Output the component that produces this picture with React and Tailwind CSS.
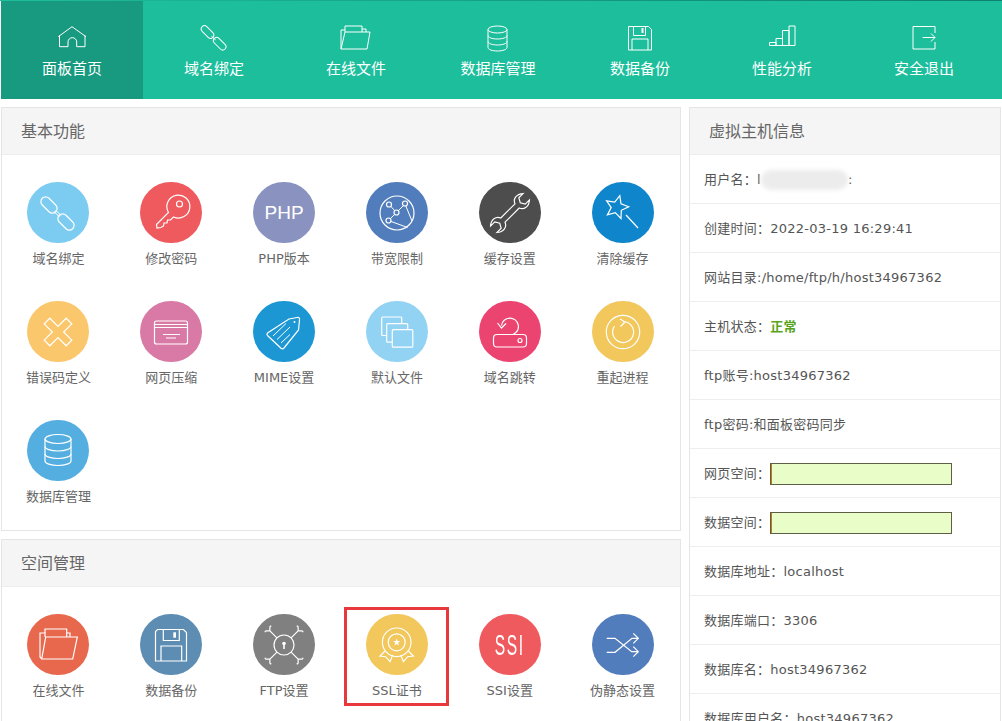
import React from "react";

const FONT = { fontFamily: '"DejaVu Sans", "Noto Sans CJK SC", sans-serif' };

function starPoints(cx, cy, R, r, rot) {
  const pts = [];
  for (let i = 0; i < 10; i++) {
    const rad = i % 2 ? r : R;
    const a = ((rot + i * 36 - 90) * Math.PI) / 180;
    pts.push(`${(cx + rad * Math.cos(a)).toFixed(1)},${(cy + rad * Math.sin(a)).toFixed(1)}`);
  }
  return pts.join(" ");
}

// nav icons, 32 box
function NavSvg({ children }) {
  return (
    <svg width="32" height="32" viewBox="1 0 32 32" fill="none" stroke="#fff" strokeWidth="1">
      {children}
    </svg>
  );
}

const navItems = [
  {
    label: "面板首页",
    active: true,
    icon: (
      <>
        <path d="M3.3 14.7 17 4.7l14 10" />
        <path d="M4.5 13.5v11.2H13V20a4.3 4.3 0 0 1 8.7 0v4.7H30V13.5" />
      </>
    ),
  },
  {
    label: "域名绑定",
    icon: (
      <>
        <rect x="7.25" y="2.5" width="6.5" height="15" rx="3.25" transform="rotate(-45 10.5 10)" />
        <rect x="19.45" y="14.2" width="6.5" height="15" rx="3.25" transform="rotate(-45 22.7 21.7)" />
        <path d="M14.5 14.3l4.2 3.6" />
      </>
    ),
  },
  {
    label: "在线文件",
    icon: (
      <>
        <path d="M6 10V4h17v6M23 7h4v3" />
        <path d="M6 8H2v19h26l3-17H6L2 27" />
      </>
    ),
  },
  {
    label: "数据库管理",
    icon: (
      <>
        <ellipse cx="16.5" cy="7.5" rx="9.5" ry="3.5" />
        <path d="M7 7.5v18c0 2 4.3 3.5 9.5 3.5s9.5-1.5 9.5-3.5v-18" />
        <path d="M7 13.5c0 2 4.3 3.5 9.5 3.5s9.5-1.5 9.5-3.5M7 19.5c0 2 4.3 3.5 9.5 3.5s9.5-1.5 9.5-3.5" />
      </>
    ),
  },
  {
    label: "数据备份",
    icon: (
      <>
        <path d="M5.5 4.5h20l3 3v20.5h-23z" />
        <path d="M10.5 4.5v9h12v-9M9 28V17h16v11" />
        <rect x="18.5" y="6" width="2" height="5" fill="#fff" stroke="none" />
      </>
    ),
  },
  {
    label: "性能分析",
    icon: <path d="M4.5 23.5v-3h6.5v3M11 23.5v-7h6.5v7M17.5 23.5v-15H24v15M24 23.5v-19.5h6v19.5M4.5 23.5H30" />,
  },
  {
    label: "安全退出",
    icon: <path d="M28 11V4.5H6v22.5h22v-7M15.7 15.5H28M24 11.5l4 4-4 4" />,
  },
];

function Wrench() {
  return (
    <path
      transform="translate(31 31) rotate(45)"
      d="M-3-10C-8-12-9-18-4.5-23v6L0-14.5 4.5-17v-6C9-18 8-12 3-10v20c5 2 6 8 1.5 13v-6L0 14.5-4.5 17v6C-9 18-8 12-3 10z"
    />
  );
}

function Fork({ rot }) {
  return (
    <g transform={`rotate(${rot} 31 31)`}>
      <path d="M31 21V10M31 11l-3-3M31 11l3-3M28 8l-1.5.5M34 8l1.5.5" />
    </g>
  );
}

const basic = [
  {
    label: "域名绑定",
    color: "bg-[#7ccbf0]",
    icon: (
      <>
        <rect x="17.25" y="13.5" width="9.5" height="19" rx="4.75" transform="rotate(-45 22 23)" />
        <rect x="34.25" y="30.5" width="9.5" height="19" rx="4.75" transform="rotate(-45 39 40)" />
        <path d="M27 29.5l5.5 5.5M28.5 28l5.5 5.5" strokeWidth="1" />
      </>
    ),
  },
  {
    label: "修改密码",
    color: "bg-[#ee5a5e]",
    icon: (
      <>
        <path d="M28.5 30.5a11.5 11.5 0 1 1 5 4.5l-3 3h-3l-.5 3h-3l-.5 3-2.5 1.5-4 .5-.5-3.5z" />
        <circle cx="39.5" cy="22" r="3" />
      </>
    ),
  },
  { label: "PHP版本", color: "bg-[#8a93bf]", text: "PHP" },
  {
    label: "带宽限制",
    color: "bg-[#527dbd]",
    icon: (
      <>
        <circle cx="31" cy="31" r="17" />
        <path d="M23 22.5l7.5 8 8.5-8.5 7 17M30.5 30.5l-8 8 19 7" strokeWidth="1" />
        <circle cx="23" cy="22.5" r="2.5" fill="#527dbd" />
        <circle cx="39" cy="21.5" r="2.5" fill="#527dbd" />
        <circle cx="30.5" cy="30.5" r="2.5" fill="#527dbd" />
        <circle cx="22.5" cy="38.5" r="2.5" fill="#527dbd" />
      </>
    ),
  },
  { label: "缓存设置", color: "bg-[#4d4d4d]", icon: <Wrench /> },
  {
    label: "清除缓存",
    color: "bg-[#0f86cc]",
    icon: (
      <>
        <polygon points={starPoints(24.7, 25.3, 12, 5.5, 15)} />
        <path d="M34 33l12 13" />
      </>
    ),
  },
  {
    label: "错误码定义",
    color: "bg-[#fbc76c]",
    icon: <path transform="translate(31 31) rotate(45)" d="M-4-15.5H4V-4H15.5V4H4V15.5H-4V4H-15.5V-4H-4Z" />,
  },
  {
    label: "网页压缩",
    color: "bg-[#d97aa6]",
    icon: (
      <>
        <rect x="14.5" y="20" width="33" height="23" rx="2" />
        <path d="M14.5 23.5h33M14.5 26.5h33M23 33.5h17M26 37h10" />
      </>
    ),
  },
  {
    label: "MIME设置",
    color: "bg-[#1c97d4]",
    icon: (
      <>
        <path d="M36 18l8-1.500q3-.5 2.500 2.500l-1 10L31 47q-1.500 1.500-3 .2L14.500 34.500q-1.200-1.200 0-2.500z" />
        <circle cx="41.5" cy="21" r="1" fill="#fff" stroke="none" />
        <path d="M20 35l13-12.500M24 38.500L37 26M28 42l9-8.500" strokeWidth="1" />
      </>
    ),
  },
  {
    label: "默认文件",
    color: "bg-[#92d3f3]",
    icon: (
      <>
        <rect x="15.7" y="16" width="20" height="18.5" rx="1" fill="#92d3f3" />
        <rect x="20.7" y="22.7" width="21" height="18.5" rx="1" fill="#92d3f3" />
        <rect x="26.3" y="28.7" width="20.5" height="17.5" rx="1" fill="#92d3f3" />
      </>
    ),
  },
  {
    label: "域名跳转",
    color: "bg-[#ec4471]",
    icon: (
      <>
        <rect x="14.5" y="33.5" width="33" height="12.5" rx="3.5" />
        <circle cx="41" cy="39.5" r="2" />
        <path d="M24 33.5h10a8.500 8.500 0 1 0-11.500-9M18.500 22l4 5 4.500-4.500" />
      </>
    ),
  },
  {
    label: "重起进程",
    color: "bg-[#f2c75c]",
    icon: (
      <>
        <circle cx="31" cy="31" r="16.7" />
        <path d="M31 20.500a10.500 10.500 0 1 1-8.500 4.500M28 18l5 3-4.500 4.500" />
      </>
    ),
  },
  {
    label: "数据库管理",
    color: "bg-[#55aee0]",
    icon: (
      <>
        <ellipse cx="31" cy="19" rx="13" ry="4.5" />
        <path d="M18 19v22c0 2.500 5.800 4.500 13 4.500s13-2 13-4.500V19" />
        <path d="M18 26.500c0 2.500 5.800 4.500 13 4.500s13-2 13-4.500M18 34c0 2.500 5.800 4.500 13 4.500s13-2 13-4.500" />
      </>
    ),
  },
];

const space = [
  {
    label: "在线文件",
    color: "bg-[#e8684e]",
    icon: (
      <>
        <path d="M18 19v-4h21.700v8M40 19h3v4" />
        <path d="M18 23V19h-5v24l1.700 2h31l4.600-22H18.700L14.700 45" />
      </>
    ),
  },
  {
    label: "数据备份",
    color: "bg-[#5e8db3]",
    icon: (
      <>
        <path d="M17.500 15.500h26l3 3v28.500h-31V17.500z" />
        <path d="M23.300 15.500v11h16v-11M21 47V32h20.700v15" />
        <rect x="33.3" y="18.3" width="2.7" height="5.4" fill="#fff" stroke="none" />
      </>
    ),
  },
  {
    label: "FTP设置",
    color: "bg-[#808080]",
    icon: (
      <>
        <circle cx="31" cy="31" r="10" />
        <circle cx="31" cy="29.5" r="1.8" fill="#fff" stroke="none" />
        <rect x="30.2" y="30" width="1.6" height="5" fill="#fff" stroke="none" />
        <Fork rot={45} />
        <Fork rot={135} />
        <Fork rot={225} />
        <Fork rot={315} />
      </>
    ),
  },
  {
    label: "SSL证书",
    color: "bg-[#f2c75c]",
    icon: (
      <>
        <circle cx="30.7" cy="28.3" r="14.3" />
        <circle cx="30.7" cy="28.3" r="8.5" />
        <polygon points={starPoints(30.7, 28.3, 3.8, 1.6, 0)} fill="#fff" stroke="none" />
        <path d="M19 37l-5 5 5.700.7 4.300 5 2.700-6.700M42.400 37l5 5-5.700.7-4.300 5-2.700-6.700" />
      </>
    ),
    boxed: true,
  },
  { label: "SSI设置", color: "bg-[#ee5a5e]", text: "SSI" },
  {
    label: "伪静态设置",
    color: "bg-[#527dbd]",
    icon: (
      <path d="M14.700 24.300H23l16.700 13.400h6.600M14.700 38.300H23l17-14h6.300M41.300 19.300l5 5-5 5M41.300 32.700l5 5-5 5" />
    ),
  },
];

function Tile({ item }) {
  return (
    <div className="relative flex h-[86px] flex-col items-center">
      <div className={`flex h-[62px] w-[62px] items-center justify-center overflow-hidden rounded-full ${item.color}`}>
        {item.text === "PHP" && (
          <span className="text-[19px] leading-none text-white" style={{ fontFamily: '"Liberation Sans", sans-serif' }}>
            PHP
          </span>
        )}
        {item.text === "SSI" && (
          <span
            className="scale-x-[.52] text-[30px] leading-none font-medium tracking-[3px] text-white"
            style={{ fontFamily: '"Liberation Sans", sans-serif' }}
          >
            SSI
          </span>
        )}
        {item.icon && (
          <svg width="62" height="62" viewBox="0 0 62 62" fill="none" stroke="#fff" strokeWidth="1.2">
            {item.icon}
          </svg>
        )}
      </div>
      <div className="mt-[7px] h-[18px] text-[13px] leading-[18px] whitespace-nowrap text-[#666]">{item.label}</div>
      {item.boxed && (
        <div className="absolute -top-[7px] left-[3.5px] h-[99px] w-[105px] border-[3px] border-[#e8383c]" />
      )}
    </div>
  );
}

function Panel({ title, items }) {
  return (
    <section className="border border-[#e5e5e5] bg-white">
      <h2 className="h-[47px] border-b border-[#eee] bg-[#f5f5f5] pl-[19px] text-[16px] leading-[48px] font-normal text-[#666]">
        {title}
      </h2>
      <div className="grid grid-cols-6 gap-y-[33px] pt-[27px] pr-[1px] pb-[24px]">
        {items.map((item) => (
          <Tile key={item.label} item={item} />
        ))}
      </div>
    </section>
  );
}

function Bar() {
  return (
    <div className="h-[22px] w-[182px] border border-[#5f5f45] bg-[#e9fdc8]">
      <div className="h-full w-[1px] bg-[#c07a1a]" />
    </div>
  );
}

const rows = [
  { key: "user" },
  { text: "创建时间：2022-03-19 16:29:41" },
  { text: "网站目录:/home/ftp/h/host34967362" },
  { key: "status" },
  { text: "ftp账号:host34967362" },
  { text: "ftp密码:和面板密码同步" },
  { key: "bar", label: "网页空间：" },
  { key: "bar", label: "数据空间：" },
  { text: "数据库地址：localhost" },
  { text: "数据库端口：3306" },
  { text: "数据库名：host34967362" },
  { text: "数据库用户名：host34967362" },
];

function InfoRow({ row }) {
  return (
    <div className="flex h-[49px] items-center border-b border-[#eee] pt-[2px] pl-[14px] text-[13px] tracking-[0.25px] whitespace-nowrap text-[#555]">
      {row.text}
      {row.key === "user" && (
        <>
          用户名：l
          <span className="h-[20px] w-[87px] rounded-full bg-[#ececec] blur-[2px]" />
          <span>:</span>
        </>
      )}
      {row.key === "status" && (
        <>
          主机状态：<span className="font-bold text-[#5aa51e]">正常</span>
        </>
      )}
      {row.key === "bar" && (
        <>
          {row.label}
          <Bar />
        </>
      )}
    </div>
  );
}

export default function App() {
  return (
    <div className="h-[721px] w-[1002px] overflow-hidden bg-white" style={FONT}>
      <div className="h-[1px] bg-gradient-to-r from-[#1dbe9c] to-[#0e7f70]" />
      <nav className="ml-[1px] flex h-[98px] bg-[#1dbe9c]">
        {navItems.map((item) => (
          <a
            key={item.label}
            className={`flex w-[142px] flex-col items-center pt-[21px] text-white ${item.active ? "bg-[#179a7f]" : ""}`}
          >
            <NavSvg>{item.icon}</NavSvg>
            <span className="mt-[5px] text-[15px] leading-[20px] whitespace-nowrap">{item.label}</span>
          </a>
        ))}
      </nav>
      <main className="mt-[8px] flex gap-[8px] pl-[1px]">
        <div className="flex w-[680px] flex-col gap-[8px]">
          <Panel title="基本功能" items={basic} />
          <Panel title="空间管理" items={space} />
        </div>
        <aside className="w-[312px] border border-[#e5e5e5]">
          <h2 className="h-[47px] border-b border-[#eee] bg-[#f5f5f5] pl-[19px] text-[16px] leading-[48px] font-normal text-[#666]">
            虚拟主机信息
          </h2>
          {rows.map((row, i) => (
            <InfoRow key={i} row={row} />
          ))}
        </aside>
      </main>
    </div>
  );
}
